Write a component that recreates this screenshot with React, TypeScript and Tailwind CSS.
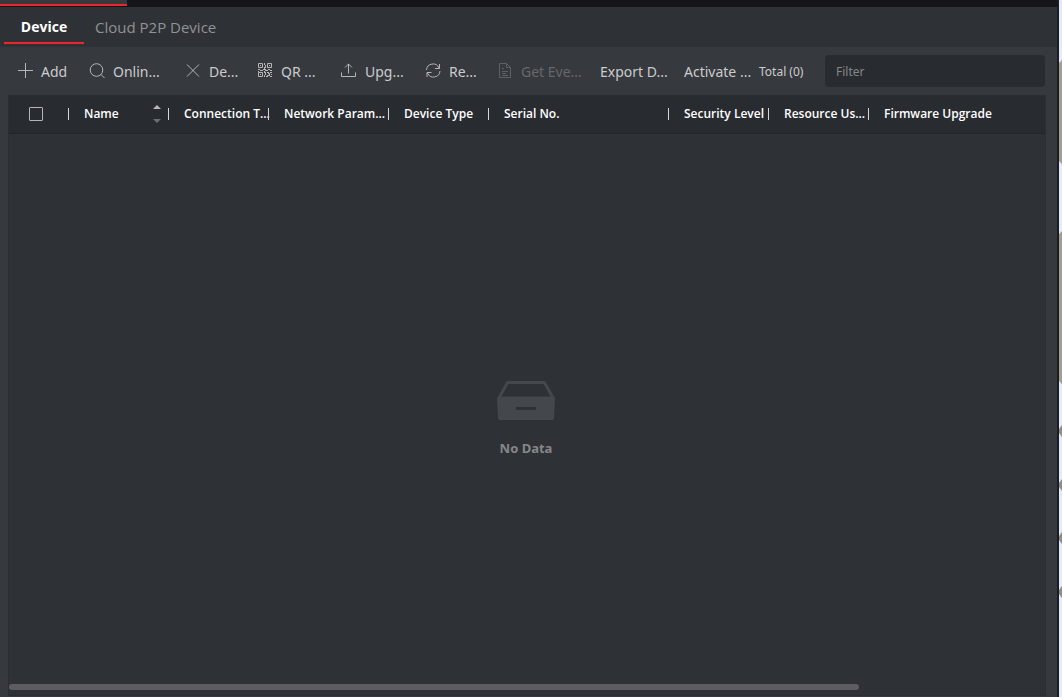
import React from "react";

type IconProps = { children: React.ReactNode };

function Icon({ children }: IconProps) {
  return (
    <svg width="16" height="16" viewBox="0 0 16 16" fill="none" stroke="currentColor" strokeWidth="1" className="shrink-0 opacity-85" aria-hidden="true">
      {children}
    </svg>
  );
}

const icons = {
  add: <Icon><path d="M8.500 0v15M1 7.500h15" /></Icon>,
  search: <Icon><circle cx="7.500" cy="7" r="6.300" /><path d="M12 11.500l3.600 3.600" /></Icon>,
  remove: <Icon><path d="M2 1.500l12 12M14 1.500l-12 12" /></Icon>,
  qr: (
    <Icon>
      <path d="M1.500 .5h4v4h-4zM10.500 .5h4v4h-4zM1.500 9.500h4v4h-4z" />
      <path d="M3 2.500h1M12 2.500h1M3 11.500h1M7.500 0v2M8.500 2v3M7.500 4v2M1 6.500h2M3 7.500h3M6 6.500h3M8 7.500h3M11 6.500h2M13 7.500h2M7.500 8v2M8.500 9v3M7.500 12v2M9.500 13v1M10 9.500h2M11 10.500h2M13 9.500h2M14.500 11v1M10 12.500h3M12 11.500h1M13 13.500h2M10.500 13v1M1 8.500h1" />
    </Icon>
  ),
  upload: <Icon><path d="M7.500 10.500V.8M4 4.500L7.500 1 11 4.500M.5 9.500v4h14v-4" /></Icon>,
  refresh: (
    <Icon>
      <path d="M1.500 7A6.500 6.500 0 0 1 14 5M14.500 1V5.500H10M15 8A6.500 6.500 0 0 1 2.500 10M2 14V9.500h4.500" />
    </Icon>
  ),
  file: <Icon><path d="M2.500 .5h7l4 4v10h-11zM9.500 .5v4h4M5 5.500h2M5 8.500h6M5 10.500h4M5 12.500h6" /></Icon>,
};

const actions = [
  { label: "Add", icon: icons.add, width: "w-[72px]" },
  { label: "Onlin...", icon: icons.search, width: "w-24" },
  { label: "De...", icon: icons.remove, width: "w-[72px]" },
  { label: "QR ...", icon: icons.qr, width: "w-[84px]" },
  { label: "Upg...", icon: icons.upload, width: "w-[84px]" },
  { label: "Re...", icon: icons.refresh, width: "w-[72px]" },
  { label: "Get Eve...", icon: icons.file, width: "w-[103px]", disabled: true },
  { label: "Export D...", width: "w-[84px]" },
  { label: "Activate ...", width: "w-[75px]" },
];

const columns = [
  { label: "Name", width: "w-[100px]", sortable: true },
  { label: "Connection T...", width: "w-[100px]" },
  { label: "Network Param...", width: "w-[120px]" },
  { label: "Device Type", width: "w-[100px]" },
  { label: "Serial No.", width: "w-[180px]" },
  { label: "Security Level", width: "w-[100px]" },
  { label: "Resource Us...", width: "w-[100px]" },
  { label: "Firmware Upgrade", width: "w-auto" },
];

function Toolbar() {
  return (
    <div className="flex h-12 shrink-0 items-center pl-[17px] pr-3">
      {actions.map((action) => (
        <button
          key={action.label}
          type="button"
          disabled={action.disabled}
          className={`flex shrink-0 items-center gap-2 whitespace-nowrap text-left text-sm text-[#cbcccd] disabled:text-[#66686b] ${action.width}`}
        >
          {action.icon}
          <span className="pt-0.5">{action.label}</span>
        </button>
      ))}
      <span className="whitespace-nowrap pt-0.5 text-xs text-[#cbcccd]">Total (0)</span>
      <input
        type="text"
        aria-label="Filter"
        placeholder="Filter"
        className="ml-auto h-8 w-[220px] rounded-sm bg-[#282b2f] px-[11px] text-xs text-[#cbcccd] outline-none placeholder:text-[#858789]"
      />
    </div>
  );
}

function DeviceTable() {
  return (
    <table className="w-full table-fixed border-collapse font-['Open_Sans',sans-serif] text-xs text-white">
      <thead className="bg-[#282b2f]">
        <tr className="h-[37px] border-b border-[#232529]">
          <th scope="col" className="w-[59px] p-0">
            <input
              type="checkbox"
              aria-label="Select all devices"
              className="ml-5 block size-3.5 appearance-none rounded-[1px] border border-[#b4b5b6] checked:bg-[#f0252b]"
            />
          </th>
          {columns.map((column) => (
            <th key={column.label} scope="col" className={`p-0 font-semibold ${column.width}`}>
              <div className="flex items-center whitespace-nowrap">
                <span className="h-3 w-px shrink-0 bg-[#d5d6d6]" />
                <span className="ml-[15px]">{column.label}</span>
                {column.sortable && (
                  <button type="button" aria-label="Sort by name" className="ml-auto mr-[7px]">
                    <svg width="8" height="18" viewBox="0 0 8 18" aria-hidden="true">
                      <path d="M0 4l4-4 4 4z" fill="#b7b8b9" />
                      <path d="M0 14l4 4 4-4z" fill="#6c6e70" />
                    </svg>
                  </button>
                )}
              </div>
            </th>
          ))}
        </tr>
      </thead>
    </table>
  );
}

function EmptyState() {
  return (
    <div className="flex flex-1 flex-col items-center justify-center gap-5 pt-5 pr-0.5 text-[#85878a]">
      <svg width="58" height="39" viewBox="0 0 58 39" aria-hidden="true">
        <path d="M10.500 1.500h37L56 17H2z" fill="none" stroke="#44474c" strokeWidth="3" strokeLinejoin="round" />
        <path d="M0 16h58l-1 21q0 2-2 2H3q-2 0-2-2z" fill="#44474c" />
        <path d="M19 26h20v3H19z" fill="#2e3136" />
      </svg>
      <p className="text-[13px] leading-4 font-bold">No Data</p>
    </div>
  );
}

function Backdrop() {
  return (
    <div className="w-[5px] shrink-0 overflow-hidden border-l-2 border-[#1c1d20] bg-[#e4e9fc]">
      <svg width="3" height="697" viewBox="0 0 3 697" fill="#a39d96" aria-hidden="true">
        <path d="M0 63l3-3v104l-3-3zM0 234l3-3v153l-3-3z" />
        <path d="M0 429l3-4v12l-3-4zM0 483l3-4v12l-3-4zM0 536l3-4v12l-3-4zM0 590l3-4v12l-3-4z" fill="#8e8d8b" />
      </svg>
    </div>
  );
}

export default function App() {
  return (
    <div className="flex h-screen bg-[#36393e] font-['Noto_Sans','Open_Sans',sans-serif]">
      <main className="flex min-w-0 flex-1 flex-col">
        <div className="h-[7px] shrink-0 bg-[#141517]">
          <div className="h-1.5 w-[127px] border-b-2 border-[#f0252b] bg-[#36393e]" />
        </div>
        <nav className="flex h-10 shrink-0 items-start bg-[#2e3136] px-1 font-['Open_Sans',sans-serif]">
          <a href="#device" aria-current="page" className="flex h-[37px] w-20 items-center justify-center border-b-2 border-[#f0252b] pt-1 text-sm font-bold text-white">
            Device
          </a>
          <a href="#cloud" className="flex h-[37px] items-center px-[11px] pt-1 text-[15px] text-[#929395]">
            Cloud P2P Device
          </a>
        </nav>
        <Toolbar />
        <section className="mr-[11px] mb-px ml-2 flex flex-1 flex-col border border-[#2b2e32] bg-[#2e3136]">
          <DeviceTable />
          <EmptyState />
          <div className="mb-[5px] h-1.5 w-[82%] rounded-full bg-[#5c5d60]" />
        </section>
      </main>
      <Backdrop />
    </div>
  );
}
